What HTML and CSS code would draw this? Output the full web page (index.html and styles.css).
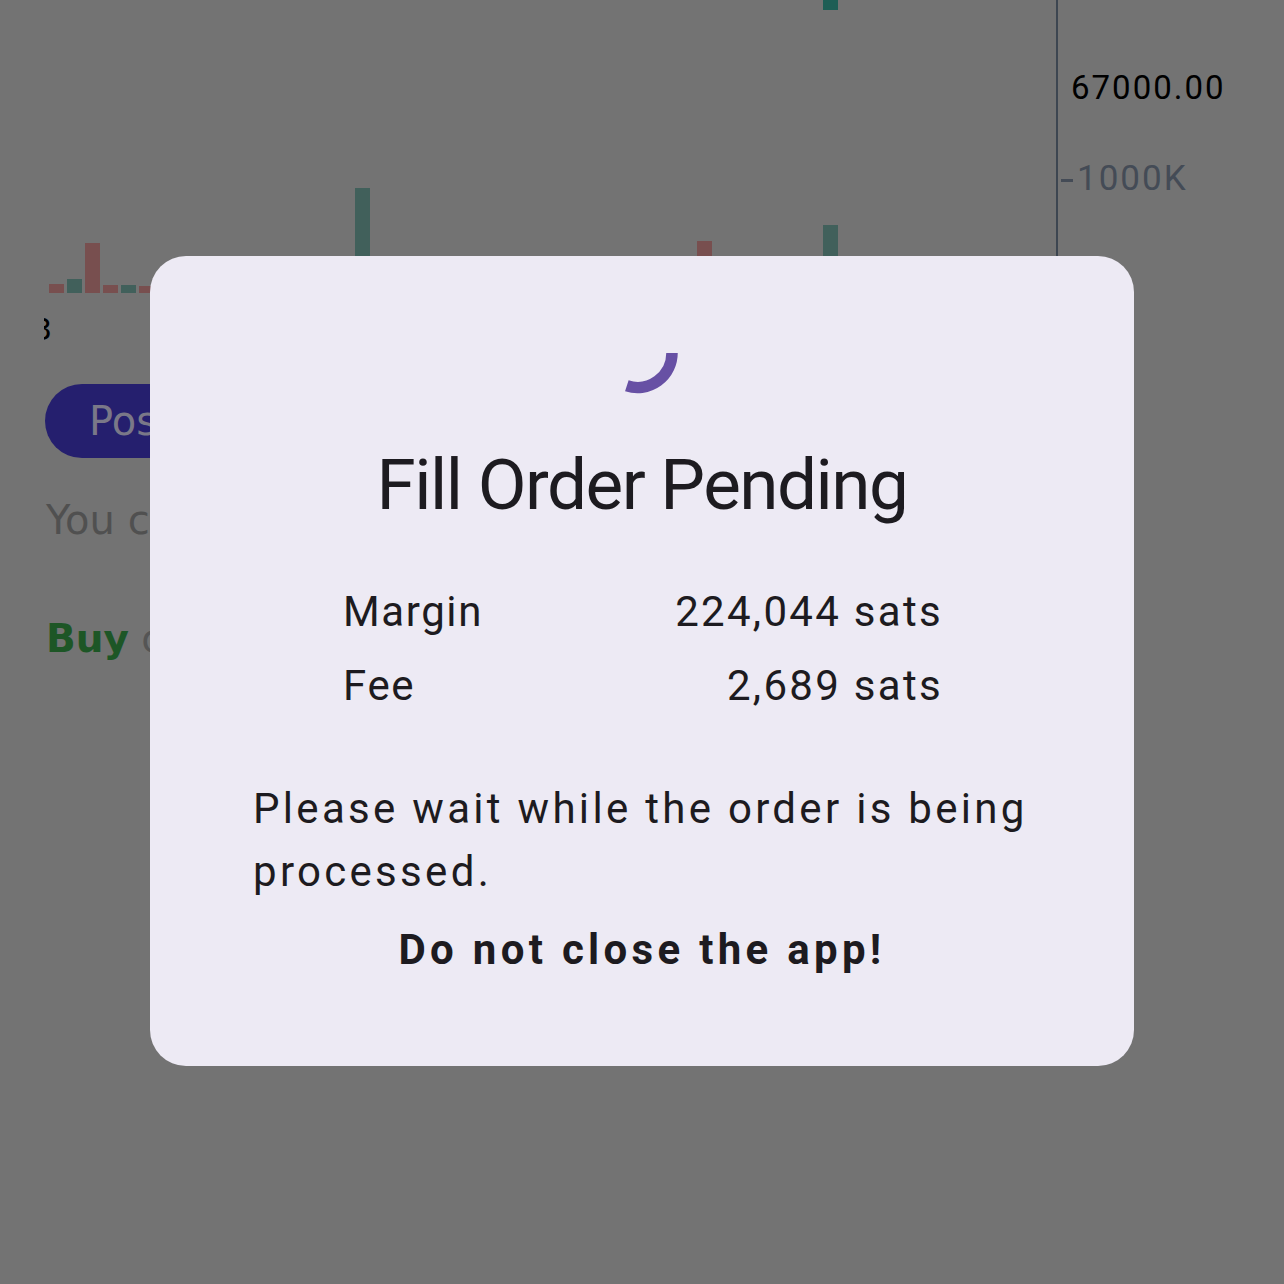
FILE: index.html
```html
<!DOCTYPE html>
<html>
<head>
<meta charset="utf-8">
<link rel="stylesheet" href="styles.css">
</head>
<body>
<div class="screen">
  <div class="chart">
    <div class="bar red" style="left:49px;top:284px;height:9px"></div>
    <div class="bar green" style="left:67px;top:279px;height:14px"></div>
    <div class="bar red" style="left:85px;top:243px;height:50px"></div>
    <div class="bar red" style="left:103px;top:285px;height:8px"></div>
    <div class="bar green" style="left:121px;top:285px;height:8px"></div>
    <div class="bar red" style="left:139px;top:286px;height:7px"></div>
    <div class="bar green" style="left:355px;top:188px;height:80px"></div>
    <div class="bar red" style="left:697px;top:241px;height:30px"></div>
    <div class="bar green" style="left:823px;top:225px;height:40px"></div>
    <div class="bar candle" style="left:823px;top:0;height:10px"></div>
    <div class="axis-line"></div>
    <div class="price-label">67000.00</div>
    <div class="vol-label"><span class="tick"></span>1000K</div>
    <div class="time-label"><span>3</span></div>
  </div>
  <div class="content">
    <div class="pill"><span>Position</span></div>
    <p class="hint">You can open a position</p>
    <p class="side"><span class="buy">Buy</span> or sell</p>
  </div>

  <div class="dialog">
    <svg class="spinner" width="90" height="90" viewBox="0 0 90 90">
      <path d="M75 45 A34.5 34.5 0 0 1 29.84 77.8" fill="none" stroke="#6750a4" stroke-width="11.5"/>
    </svg>
    <h1 class="title">Fill Order Pending</h1>
    <div class="rows">
      <div class="row"><span class="label">Margin</span><span class="value">224,044 sats</span></div>
      <div class="row"><span class="label">Fee</span><span class="value">2,689 sats</span></div>
    </div>
    <p class="body">Please wait while the order is being processed.</p>
    <p class="warn">Do not close the app!</p>
  </div>
</div>
</body>
</html>
```

FILE: styles.css
```css
html, body {
  margin: 0;
  padding: 0;
}
body {
  background: #737373;
  width: 1284px;
  height: 1284px;
  overflow: hidden;
}
.screen {
  position: relative;
  width: 1284px;
  height: 1284px;
  overflow: hidden;
  background: #737373;
}
.chart {
  position: relative;
  height: 384px;
}
.bar {
  position: absolute;
  width: 15px;
}
.bar.red { background: #784f4f; }
.bar.green { background: #41605b; }
.bar.candle { background: #1e5e55; }
.axis-line {
  position: absolute;
  left: 1056px;
  top: 0;
  width: 2px;
  height: 300px;
  background: #3d4651;
}
.price-label {
  position: absolute;
  left: 1071px;
  top: 66px;
  font-family: Roboto, sans-serif;
  font-size: 33px;
  letter-spacing: 2px;
  color: #000;
  line-height: 44px;
}
.vol-label {
  position: absolute;
  left: 1061px;
  top: 156px;
  font-family: Roboto, sans-serif;
  font-size: 35px;
  letter-spacing: 2px;
  color: #444b56;
  line-height: 46px;
  display: flex;
  align-items: center;
}
.tick {
  display: inline-block;
  width: 12px;
  height: 3px;
  background: #444b56;
  margin-right: 4px;
  margin-top: 2px;
}
.time-label {
  position: absolute;
  left: 44px;
  top: 310px;
  width: 7px;
  height: 40px;
  overflow: hidden;
  font-family: "DejaVu Sans", sans-serif;
  font-size: 30px;
  line-height: 40px;
  color: #000;
}
.time-label span {
  display: block;
  margin-left: -11px;
}
.content {
  padding-left: 45px;
  font-family: "DejaVu Sans", sans-serif;
}
.pill {
  display: inline-flex;
  align-items: center;
  height: 74px;
  padding: 0 44px;
  border-radius: 37px;
  background: #251f6e;
  color: #7a7888;
  font-size: 40px;
  box-sizing: border-box;
  width: 400px;
}
.hint {
  margin: 38px 0 0 1px;
  font-size: 40px;
  line-height: 48px;
  color: #505050;
}
.side {
  margin: 71px 0 0 1px;
  font-size: 39px;
  line-height: 48px;
  color: #555;
}
.buy {
  color: #1d5626;
  font-weight: bold;
}
.dialog {
  position: absolute;
  left: 150px;
  top: 256px;
  width: 984px;
  box-sizing: border-box;
  padding: 52px 0 85px;
  background: #edeaf4;
  border-radius: 36px;
  display: flex;
  flex-direction: column;
  align-items: center;
  font-family: Roboto, sans-serif;
  color: #1d1b20;
}
.spinner {
  display: block;
  width: 90px;
  height: 90px;
}
.title {
  margin: 45px 0 0;
  font-size: 71px;
  font-weight: 400;
  line-height: 84px;
  letter-spacing: -1.5px;
}
.rows {
  margin-top: 53px;
  width: 598px;
  display: flex;
  flex-direction: column;
  gap: 11px;
}
.row {
  display: flex;
  justify-content: space-between;
  font-size: 42px;
  line-height: 63px;
}
.label {
  letter-spacing: 1.6px;
}
.value {
  letter-spacing: 2.3px;
  margin-right: -2px;
}
.body {
  margin: 60px 0 0;
  width: 778px;
  font-size: 42px;
  line-height: 63px;
  letter-spacing: 3.3px;
}
.warn {
  margin: 15px 0 0;
  font-size: 42px;
  line-height: 63px;
  font-weight: 700;
  letter-spacing: 4.3px;
}
```
